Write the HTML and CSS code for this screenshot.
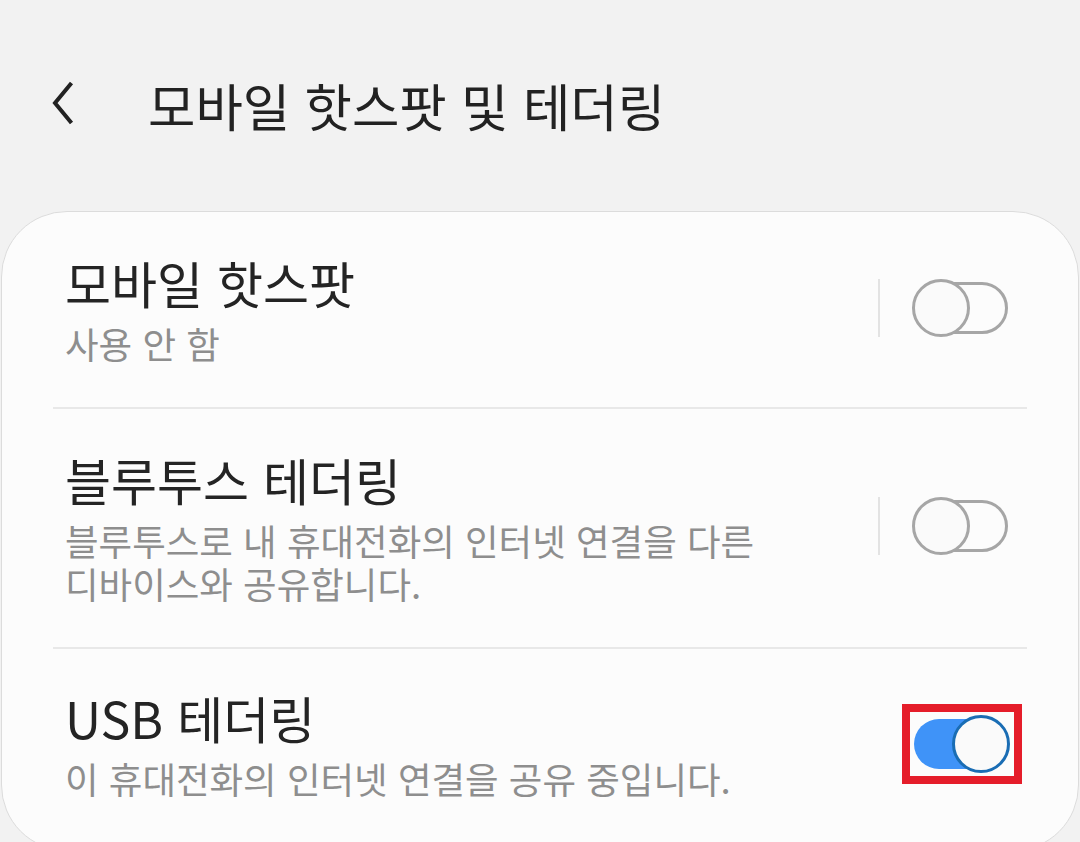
FILE: index.html
```html
<!DOCTYPE html>
<html lang="ko">
<head>
<meta charset="utf-8">
<link rel="stylesheet" href="styles.css">
</head>
<body>
<header class="appbar">
  <svg class="back" width="22" height="44" viewBox="0 0 22 44"><polyline points="19.5,2 3,22 19.5,42" fill="none" stroke="#222" stroke-width="4" stroke-linejoin="miter"/></svg>
  <h1 class="title">모바일 핫스팟 및 테더링</h1>
</header>
<main class="card">
  <div class="row">
    <div class="text">
      <div class="label">모바일 핫스팟</div>
      <div class="desc">사용 안 함</div>
    </div>
    <div class="sep"></div>
    <div class="switch off"><span class="track"></span><span class="thumb"></span></div>
  </div>
  <div class="divider"></div>
  <div class="row">
    <div class="text">
      <div class="label">블루투스 테더링</div>
      <div class="desc">블루투스로 내 휴대전화의 인터넷 연결을 다른<br>디바이스와 공유합니다.</div>
    </div>
    <div class="sep"></div>
    <div class="switch off"><span class="track"></span><span class="thumb"></span></div>
  </div>
  <div class="divider"></div>
  <div class="row last">
    <div class="text">
      <div class="label">USB 테더링</div>
      <div class="desc">이 휴대전화의 인터넷 연결을 공유 중입니다.</div>
    </div>
    <div class="highlight">
      <div class="switch on"><span class="track"></span><span class="thumb"></span></div>
    </div>
  </div>
</main>
</body>
</html>
```
FILE: styles.css
```css
html, body {
  margin: 0;
  padding: 0;
}
body {
  background: #f2f2f2;
  font-family: "Noto Sans CJK KR", "Noto Sans", sans-serif;
  width: 1080px;
  height: 842px;
  overflow: hidden;
}
.appbar {
  display: flex;
  align-items: center;
  height: 70px;
  padding: 70px 0 71px 52px;
}
.back {
  display: block;
  flex: none;
  margin-bottom: 4px;
}
.title {
  margin: 0 0 0 74px;
  font-size: 51.5px;
  font-weight: 400;
  color: #222;
  line-height: 70px;
  letter-spacing: 0;
}
.card {
  background: #fcfcfc;
  border: 1px solid #dcdcdc;
  border-radius: 66px;
  margin: 0 1px;
  box-sizing: border-box;
  height: 640px;
}
.row {
  display: flex;
  align-items: center;
  padding: 38px 70px 42px 63px;
}
.row.last {
  padding-top: 36px;
  padding-bottom: 34px;
}
.text {
  flex: 1;
}
.label {
  font-size: 50px;
  line-height: 64px;
  color: #242424;
}
.desc {
  margin-top: 8px;
  font-size: 36.5px;
  line-height: 43px;
  color: #8e8e8e;
}
.sep {
  width: 2px;
  height: 58px;
  background: #e3e3e3;
  margin-right: 32px;
}
.divider {
  height: 2px;
  background: #e8e8e8;
  margin: 0 51px;
}
.switch {
  position: relative;
  width: 96px;
  height: 58px;
  flex: none;
}
.switch .track,
.switch .thumb {
  position: absolute;
  box-sizing: border-box;
}
.switch .track {
  border-radius: 26px;
}
.switch .thumb {
  top: 0;
  width: 58px;
  height: 58px;
  border-radius: 50%;
  background: #fafafa;
}
.switch.off .track {
  left: 10px;
  right: 0;
  top: 3px;
  height: 52px;
  border: 3px solid #a6a6a6;
}
.switch.off .thumb {
  left: 0;
  border: 3px solid #a6a6a6;
}
.switch.on .track {
  left: 0;
  right: 10px;
  top: 4px;
  height: 50px;
  background: #3f93f8;
}
.switch.on .thumb {
  right: 0;
  border: 3px solid #1a6db4;
}
.highlight {
  border: 8px solid #e51d2a;
  padding: 3px 4px 3px 4px;
  margin-right: -14px;
  margin-top: 3px;
}
```
